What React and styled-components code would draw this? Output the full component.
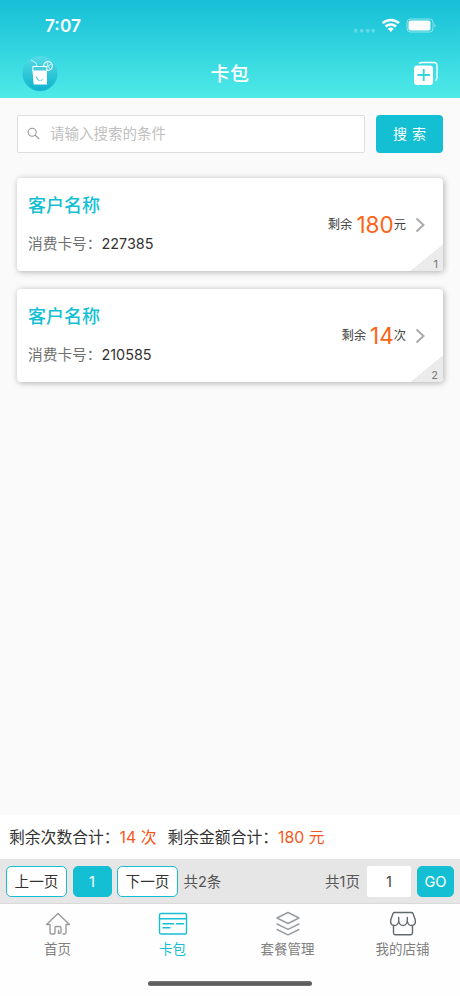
import React from 'react';
import styled, { createGlobalStyle } from 'styled-components';

const Global = createGlobalStyle`
  * { box-sizing: border-box; }
  body { margin: 0; background: #fafafa; }
  button, input { font: inherit; margin: 0; padding: 0; border: 0; outline: 0; }
`;

const TEAL = '#15bfd3';
const ORANGE = '#fa6414';

const Screen = styled.div`
  width: 460px;
  height: 996px;
  display: flex;
  flex-direction: column;
  overflow: hidden;
  background: #fafafa;
  color: #333;
  font-family: Inter, 'Noto Sans CJK SC', sans-serif;
  font-size: 14.5px;
  line-height: 20px;
`;

const Header = styled.header`
  height: 98px;
  flex: none;
  background: linear-gradient(#15bfd6, #4feae8);
  color: #fff;
`;

const StatusBar = styled.div`
  height: 50px;
  display: flex;
  align-items: center;
  justify-content: space-between;
  padding: 1px 24px 0 45px;
`;

const Clock = styled.span`
  font-size: 17.3px;
  font-weight: 600;
  line-height: 20px;
`;

const StatusIcons = styled.svg`
  display: block;
  width: 82px;
  height: 16px;
  margin-top: -2px;
`;

const NavBar = styled.div`
  height: 48px;
  display: grid;
  grid-template-columns: 50px 1fr 50px;
  align-items: center;
  padding: 0 21px;
`;

const Logo = styled.svg`
  display: block;
  width: 38px;
  height: 38px;
`;

const Title = styled.h1`
  margin: 2px 0 0;
  text-align: center;
  font-size: 19px;
  font-weight: 500;
  letter-spacing: 0.5px;
  line-height: 28px;
`;

const AddIcon = styled.svg`
  display: block;
  justify-self: end;
  width: 26px;
  height: 26px;
`;

const Main = styled.main`
  flex: 1;
  padding: 17px 17px 0;
`;

const SearchRow = styled.div`
  display: flex;
  gap: 11px;
  height: 38px;
`;

const SearchBox = styled.label`
  flex: 1;
  display: flex;
  align-items: center;
  gap: 10px;
  padding: 0 0 2px 9px;
  border: 1px solid #dedede;
  border-radius: 2px;
  background: #fff;
`;

const SearchInput = styled.input`
  flex: 1;
  min-width: 0;
  background: none;
  color: #333;
  height: 22px;
  &::placeholder { color: #c0c0c0; opacity: 1; }
`;

const SearchButton = styled.button`
  width: 67px;
  border-radius: 4px;
  background: ${TEAL};
  color: #fff;
  font-size: 14px;
  word-spacing: 1px;
`;

const CardList = styled.div`
  display: flex;
  flex-direction: column;
  gap: 18px;
  margin-top: 25px;
`;

const Card = styled.article`
  position: relative;
  height: 93px;
  display: flex;
  justify-content: space-between;
  align-items: center;
  padding: 0 18px 0 11px;
  border-radius: 4px;
  background: #fff;
  box-shadow: 1px 1px 6px rgba(0, 0, 0, 0.3);
`;

const CardInfo = styled.div`
  display: flex;
  flex-direction: column;
  gap: 16px;
  margin-top: -1px;
`;

const CustomerName = styled.div`
  color: ${TEAL};
  font-size: 18px;
  font-weight: 500;
  line-height: 24px;
`;

const CardNumber = styled.div`
  display: flex;
  color: #707070;
  font-size: 14.7px;
`;

const Digits = styled.span`
  color: #333;
  font-size: 14.4px;
`;

const Balance = styled.div`
  display: flex;
  align-items: center;
  font-size: 12.3px;
  color: #444;
`;

const Amount = styled.span`
  margin-left: 4px;
  color: ${ORANGE};
  font-size: 22.5px;
  letter-spacing: 0;
  line-height: 28px;
`;

const Chevron = styled.svg`
  display: block;
  width: 10px;
  height: 16px;
  margin-left: 9px;
`;

const Corner = styled.div`
  position: absolute;
  right: 0;
  bottom: 0;
  width: 33px;
  height: 27px;
  padding: 13px 5px 0 0;
  border-radius: 0 0 4px;
  background: linear-gradient(to bottom right, transparent 50%, #ebebeb 51%);
  color: #777;
  text-align: right;
  font-size: 11px;
  line-height: 14px;
`;

const Summary = styled.div`
  flex: none;
  display: flex;
  align-items: center;
  height: 44px;
  padding: 2px 0 0 9px;
  background: #fff;
  font-size: 15.8px;
`;

const Total = styled.span`
  margin-right: 11px;
  color: #f5571b;
  font-size: 15.8px;
`;

const Pager = styled.div`
  flex: none;
  display: flex;
  align-items: center;
  height: 45px;
  padding: 0 6px;
  border-bottom: 1px solid #d9d9d9;
  background: #e6e6e6;
  color: #555;
`;

const PageButton = styled.button`
  width: ${p => p.$width}px;
  height: 31px;
  padding-top: 1px;
  margin-right: ${p => p.$gap ?? 5.5}px;
  border: 1px solid ${TEAL};
  border-radius: 5px;
  background: ${p => (p.$filled ? TEAL : '#fff')};
  color: ${p => (p.$filled ? '#fff' : '#333')};
  font-size: 14.6px;
`;

const PageCount = styled.span`
  padding-top: 1px;
`;

const PageTotal = styled(PageCount)`
  margin-left: auto;
  margin-right: 7px;
`;

const PageInput = styled.input`
  width: 44px;
  height: 31px;
  margin-right: 6px;
  border-radius: 2px;
  background: #fff;
  color: #444;
  text-align: center;
`;

const TabBar = styled.nav`
  flex: none;
  display: grid;
  grid-template-columns: repeat(4, 1fr);
  height: 71px;
  background: #fefefe;
`;

const Tab = styled.div`
  display: flex;
  flex-direction: column;
  align-items: center;
  padding-top: 5px;
  gap: 2px;
  color: ${p => (p.$active ? TEAL : '#808080')};
  font-size: 13.5px;
  line-height: 20px;
`;

const TabIcon = styled.svg`
  display: block;
  width: 30px;
  height: 28px;
  color: ${p => p.$color};
  fill: none;
  stroke: currentColor;
  stroke-width: 1.4;
  stroke-linecap: round;
  stroke-linejoin: round;
`;

const HomeArea = styled.div`
  flex: none;
  height: 21px;
  display: flex;
  justify-content: center;
  padding-top: 6px;
  background: #fefefe;
`;

const HomeIndicator = styled.div`
  width: 164px;
  height: 5px;
  border-radius: 3px;
  background: linear-gradient(#777, #555 60%, #777);
`;

const cards = [
  { name: '客户名称', number: '227385', amount: '180', unit: '元' },
  { name: '客户名称', number: '210585', amount: '14', unit: '次' },
];

const tabs = [
  {
    label: '首页',
    color: '#9b9b9b',
    icon: (
      <path d="M3.500 15.500 15 4.500l11.500 11H23v8q0 1.500-1.500 1.500H20M3.500 15.500H7v8Q7 25 8.500 25H11q1 0 1-1.500V19q0-1.500 1.500-1.500h3q1.500 0 1.500 1.500v4q0 1.200-1 1.200h-1.500v-3" />
    ),
  },
  {
    label: '卡包',
    color: TEAL,
    active: true,
    icon: (
      <>
        <rect x="1.500" y="4.500" width="27" height="20.500" rx="1.500" />
        <path d="M1.500 9.800h27M5 14.700h10.500M18.500 14.700h7M5 18.700h7" />
      </>
    ),
  },
  {
    label: '套餐管理',
    color: '#969da1',
    icon: <path d="m15 3.500 11 5.500-11 5.500L4 9zM4 15l11 5.300L26 15M4 20.500l11 5.300 11-5.300" />,
  },
  {
    label: '我的店铺',
    color: '#626a6e',
    icon: (
      <path d="M6.500 3.500h17q1 0 1.500 1l2.300 6.500q.7 5.500-3.800 5.500-3.500 0-4.200-4.500-.8 4.500-4.300 4.500T10.700 12q-.7 4.500-4.200 4.500Q2 16.500 2.700 11L5 4.500q.5-1 1.500-1zM10.700 12V8.500M19.300 12V8.500M5.500 17v7q0 1.700 1.700 1.700h15.600q1.700 0 1.700-1.700v-7" />
    ),
  },
];

function DrinkLogo() {
  return (
    <Logo viewBox="0 0 38 38" fill="none">
      <defs>
        <linearGradient id="badge" x2="0" y2="1">
          <stop stopColor="#54dce6" />
          <stop offset="1" stopColor="#0fb2cc" />
        </linearGradient>
      </defs>
      <circle cx="19" cy="18.500" r="17.500" fill="url(#badge)" />
      <circle cx="27" cy="11" r="4.300" stroke="#e9ffff" strokeWidth="1.200" />
      <path d="M24 12l3-1 3-2M27 11l2 3M27 11l-1-3" stroke="#e9ffff" strokeWidth=".8" />
      <path d="m10 5 5 3 1.500 7" stroke="#c5f7f8" />
      <path d="M11.800 11.500h14v4.500h-14z" fill="#45cddb" stroke="#fff" />
      <path d="M11.500 16H26v13.500H12.700z" fill="#fff" />
      <path d="m15 21.500 2.500 4M18.500 25l.5.800M20 25.500l1.500-1" stroke={TEAL} />
    </Logo>
  );
}

export default function App() {
  return (
    <Screen>
      <Global />
      <Header>
        <StatusBar>
          <Clock>7:07</Clock>
          <StatusIcons viewBox="0 0 82 16" fill="none">
            <g fill="#fff" opacity=".25">
              <rect y="12" width="3.500" height="3.500" rx="1" />
              <rect x="6" y="12" width="3.500" height="3.500" rx="1" />
              <rect x="12" y="12" width="3.500" height="3.500" rx="1" />
              <rect x="17.500" y="12" width="3.500" height="3.500" rx="1" />
            </g>
            <g stroke="#fff" strokeWidth="2.500">
              <path d="M28.600 6.200c4.600-4.300 11.800-4.300 16.400 0M31.600 9.500c3-2.800 7.400-2.800 10.400 0" />
            </g>
            <path d="M33.800 11.700q3-2.500 6 0l-3 3.200z" fill="#fff" />
            <rect x="53" y="2" width="26" height="13" rx="3.500" stroke="#fff" opacity=".5" />
            <rect x="54.500" y="3.500" width="22" height="10" rx="2" fill="#fff" />
            <path d="M80.500 6.500q2 2 0 4z" fill="#fff" opacity=".6" />
          </StatusIcons>
        </StatusBar>
        <NavBar>
          <DrinkLogo />
          <Title>卡包</Title>
          <AddIcon viewBox="0 0 26 26" fill="none">
            <path d="M6 2.500Q7 1.500 9 1.500h12q3 0 3 3v12q0 2-1.500 3" stroke="#fff" strokeWidth="1.300" />
            <rect x="1" y="4.500" width="19" height="19.500" rx="3" fill="#fff" />
            <path d="M4.500 14h12.500M10.700 8v12" stroke="#35d3dc" strokeWidth="1.800" />
          </AddIcon>
        </NavBar>
      </Header>

      <Main>
        <SearchRow>
          <SearchBox>
            <svg width="13" height="13" viewBox="0 0 13 13" fill="none" stroke="#999" strokeWidth="1.100">
              <circle cx="5.200" cy="5.200" r="4" />
              <path d="m8.200 8.200 4 3.800" />
            </svg>
            <SearchInput placeholder="请输入搜索的条件" />
          </SearchBox>
          <SearchButton>搜 索</SearchButton>
        </SearchRow>

        <CardList>
          {cards.map((card, i) => (
            <Card key={card.number}>
              <CardInfo>
                <CustomerName>{card.name}</CustomerName>
                <CardNumber>
                  消费卡号：<Digits>{card.number}</Digits>
                </CardNumber>
              </CardInfo>
              <Balance>
                剩余<Amount>{card.amount}</Amount>{card.unit}
                <Chevron viewBox="0 0 10 16" fill="none" stroke="#aaa" strokeWidth="2">
                  <path d="m1.500 1.500 7 6.500-7 6.500" />
                </Chevron>
              </Balance>
              <Corner>{i + 1}</Corner>
            </Card>
          ))}
        </CardList>
      </Main>

      <Summary>
        剩余次数合计：<Total>14 次</Total>
        剩余金额合计：<Total>180 元</Total>
      </Summary>
      <Pager>
        <PageButton $width={61}>上一页</PageButton>
        <PageButton $width={39} $filled>1</PageButton>
        <PageButton $width={61}>下一页</PageButton>
        <PageCount>共2条</PageCount>
        <PageTotal>共1页</PageTotal>
        <PageInput defaultValue="1" />
        <PageButton $width={37} $gap={0} $filled>GO</PageButton>
      </Pager>
      <TabBar>
        {tabs.map(tab => (
          <Tab key={tab.label} $active={tab.active}>
            <TabIcon viewBox="0 0 30 28" $color={tab.color}>{tab.icon}</TabIcon>
            {tab.label}
          </Tab>
        ))}
      </TabBar>
      <HomeArea>
        <HomeIndicator />
      </HomeArea>
    </Screen>
  );
}
